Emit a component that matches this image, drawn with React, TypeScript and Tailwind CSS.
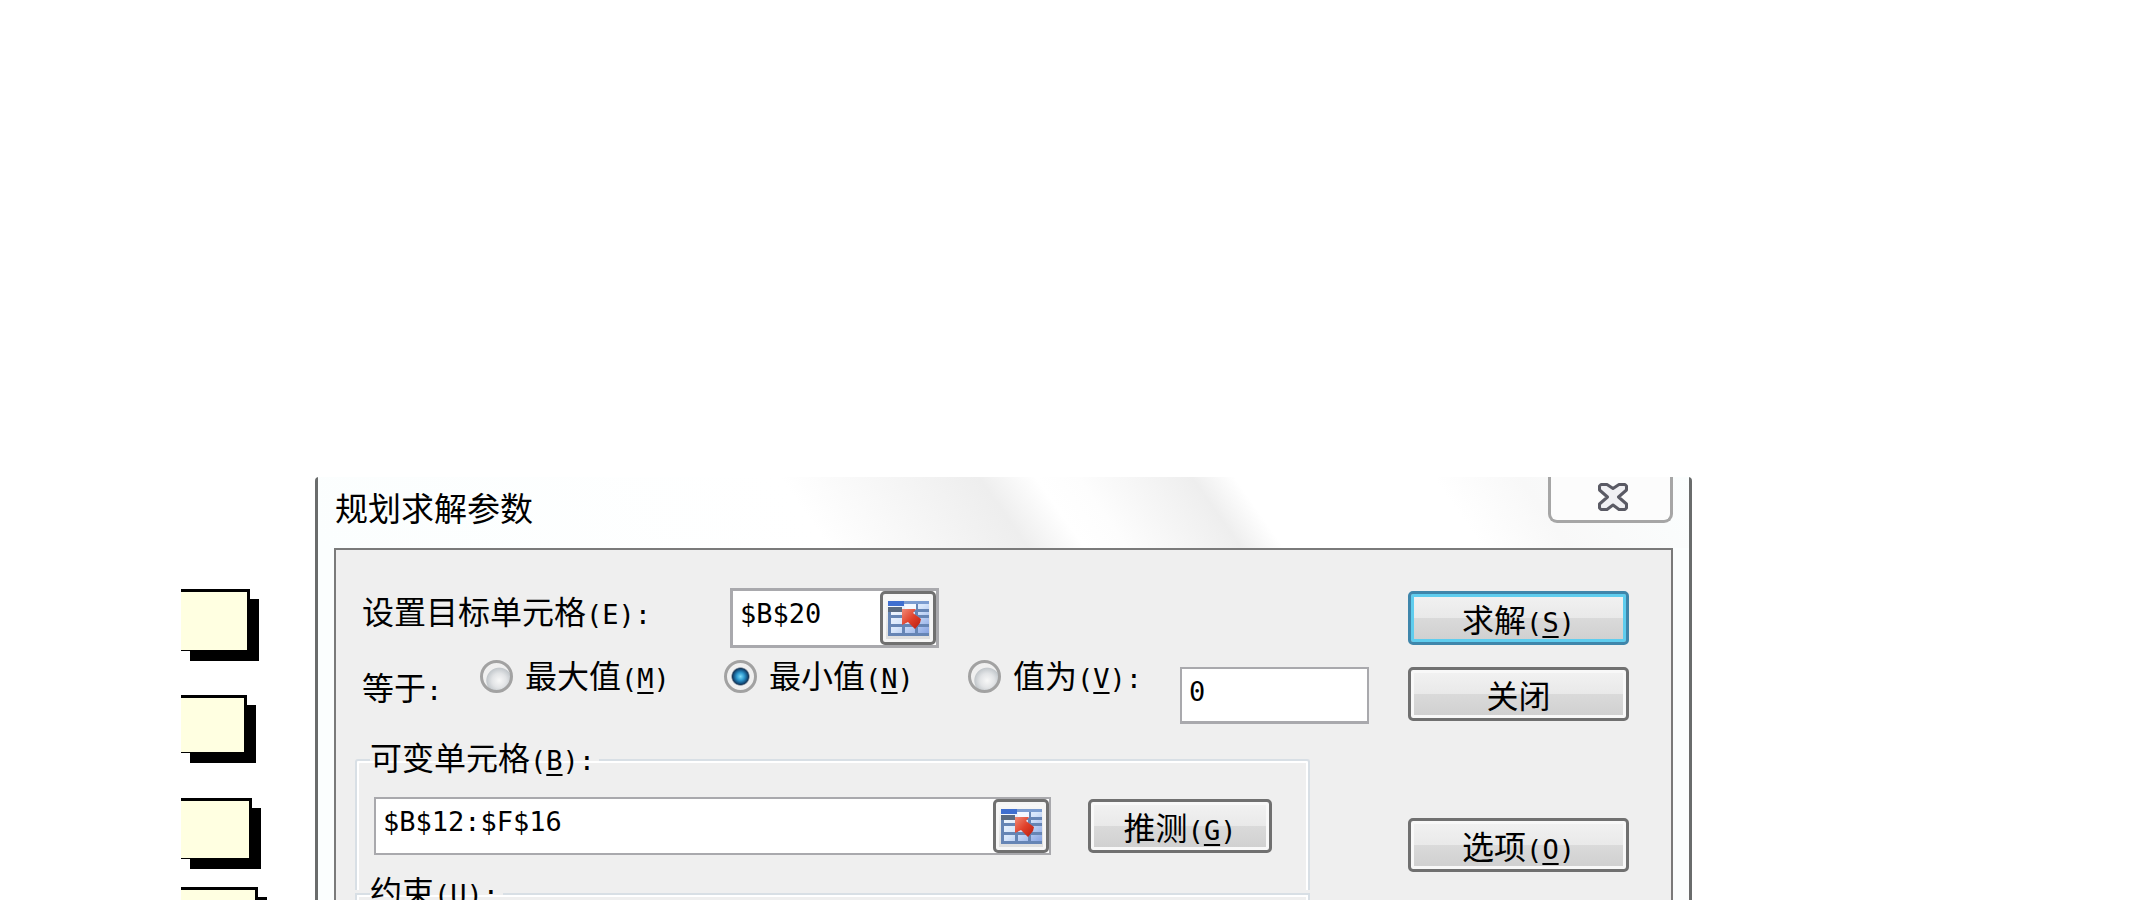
import type { ReactNode } from "react";

const cjk = "font-['Noto_Sans_CJK_SC',sans-serif]";
const mono = "font-['DejaVu_Sans_Mono',monospace]";

function Key({ letter, plain, colon }: { letter?: string; plain?: boolean; colon?: boolean }) {
  return (
    <span className={`text-[27px] leading-none ${mono}`}>
      {letter && (
        <>
          (<span className={plain ? "" : "underline decoration-2 underline-offset-4"}>{letter}</span>)
        </>
      )}
      {colon && ":"}
    </span>
  );
}

function PushButton({ children, primary, className = "" }: { children: ReactNode; primary?: boolean; className?: string }) {
  const tone = primary
    ? "border-[#3f86ab] shadow-[inset_0_0_0_3px_#5fcdee]"
    : "border-[#707070] shadow-[inset_0_0_0_3px_#f8f8f8]";
  return (
    <button
      type="button"
      className={`h-[54px] shrink-0 rounded-[5px] border-[3px] bg-[linear-gradient(#f2f2f2,#e9e9e9_50%,#dadada_50%,#cfcfcf)] leading-[36px] whitespace-nowrap ${tone} ${className}`}
    >
      {children}
    </button>
  );
}

function PickerIcon() {
  return (
    <svg viewBox="0 0 41 35" className="h-[35px] w-[41px]" aria-hidden="true">
      <defs>
        <linearGradient id="sheet" x1="0" y1="0" x2="1" y2="1">
          <stop offset="0" stopColor="#ffffff" />
          <stop offset="0.5" stopColor="#d6e5fb" />
          <stop offset="1" stopColor="#7f9de0" />
        </linearGradient>
        <linearGradient id="arrow" x1="0" y1="0" x2="1" y2="1">
          <stop offset="0" stopColor="#f08a76" />
          <stop offset="0.5" stopColor="#e0402a" />
          <stop offset="1" stopColor="#b81d10" />
        </linearGradient>
      </defs>
      <rect width="41" height="35" fill="url(#sheet)" />
      <rect width="41" height="3" fill="#7b9cd0" />
      <rect width="16" height="5" fill="#3f6fd0" />
      <rect y="6" width="14" height="5" fill="#5b6b80" />
      <path d="M15 9.500H41M0 15.500H41M0 24.500H41M0 33.500H41" stroke="#6685b5" strokeWidth="3" />
      <path d="M1.500 11V35M15.500 14V35M28.500 3V35" stroke="#6685b5" strokeWidth="3" />
      <path d="M17 3H28V9H17Z" fill="#f4f8ff" />
      <path d="M14 8H28L25 12L33 18L32 22L27 28L20 21L14 24Z" fill="url(#arrow)" />
    </svg>
  );
}

function RefField({ label, value, border }: { label: string; value: string; border: string }) {
  return (
    <div className={`flex items-start border-[#a9a9ad] bg-white ${border}`}>
      <input
        aria-label={label}
        defaultValue={value}
        className={`h-11 min-w-0 flex-1 bg-transparent pl-[7px] text-[27px] outline-none ${mono}`}
      />
      <button
        type="button"
        aria-label={`${label} ▾`}
        className="flex h-[54px] w-14 shrink-0 items-center justify-center rounded-[5px] border-[3px] border-[#707070] bg-linear-to-b from-[#fafafa] to-[#dcdcdc] shadow-[inset_0_0_0_3px_#f6f6f6]"
      >
        <PickerIcon />
      </button>
    </div>
  );
}

function Radio({ children, checked, className }: { children: ReactNode; checked?: boolean; className: string }) {
  return (
    <label className={`flex shrink-0 items-center gap-3 whitespace-nowrap ${className}`}>
      <input
        type="radio"
        name="goal"
        defaultChecked={checked}
        className="size-[33px] shrink-0 appearance-none rounded-full border-[3px] border-[#a2a2a2] bg-[radial-gradient(circle_at_60%_65%,#f8f8f8_0,#e2e4e6_30%,#c3c8cc_52%,#f0f0f0_56%)] checked:bg-[radial-gradient(circle,#7fdcf8_0,#2f9ad0_20%,#124a78_38%,#1b3a5a_42%,#f0f0f0_50%)]"
      />
      <span className="pb-1">{children}</span>
    </label>
  );
}

function Note({ className }: { className: string }) {
  return <div className={`border-t-[3px] border-r-[3px] border-b border-black bg-[#ffffe1] shadow-[9px_10px_0_black] ${className}`} />;
}

function CloseGlyph() {
  return (
    <svg viewBox="0 0 30 28" className="h-[28px] w-[30px]" aria-hidden="true">
      <path
        d="M3 1.500H9L15 5.500L21 1.500H27L28.500 3V7L20.500 14L28.500 21V25L27 26.500H21L15 22L9 26.500H3L1.500 25V21L9.500 14L1.500 7V3Z"
        fill="#f0f0f3"
        stroke="#5a5a64"
        strokeWidth="3"
        strokeLinejoin="round"
      />
    </svg>
  );
}

const groupBorder = "border-[#d8dfe5] shadow-[inset_2px_2px_0_white,inset_-2px_0_0_white]";

export default function App() {
  return (
    <div className={`flex h-screen overflow-hidden bg-white pt-[477px] pr-[457px] pl-[181px] text-[32px] leading-[36px] text-black ${cjk}`}>
      <div className="w-[134px] shrink-0 overflow-hidden pt-[112px]">
        <Note className="h-[62px] w-[69px]" />
        <Note className="mt-[44px] h-[58px] w-[66px]" />
        <Note className="mt-[45px] h-[61px] w-[71px]" />
        <Note className="mt-[28px] h-[61px] w-[77px]" />
      </div>

      <main className="flex min-w-0 flex-1 flex-col rounded-t-[4px] border-x-[3px] border-[#6a6c6c] bg-[#fbfefe]">
        <header className="flex h-[71px] shrink-0 items-start justify-between bg-[linear-gradient(55deg,#fbfefe_0,#ffffff_36%,#efefef_49%,#eeeeee_50%,#ffffff_54%,#fdfdfd_57%,#f0f0f0_64%,#eeeeee_65%,#ffffff_68%,#ffffff_82%,#f8f8f8_88%,#fbfefe_100%)] pr-4 pl-[17px]">
          <h1 className="pt-3 text-[33px]">规划求解参数</h1>
          <button
            type="button"
            aria-label="关闭"
            className="flex h-[46px] w-[125px] justify-center rounded-b-[9px] border-x-[3px] border-b-[3px] border-[#a6a6a6] bg-[#fcfcfc] pt-[6px] pl-1"
          >
            <CloseGlyph />
          </button>
        </header>

        <div className="mr-4 ml-4 flex min-h-0 flex-1 gap-[39px] border-x-2 border-t-2 border-[#7a7a7a] bg-[#efefef] pt-[38px] pr-[42px] pl-[19px]">
          <div className="min-w-0 flex-1">
            <div className="flex pl-[7px]">
              <div className="w-[368px] shrink-0 pt-1">
                设置目标单元格
                <Key letter="E" plain colon />
              </div>
              <div className="w-[209px]">
                <RefField label="设置目标单元格" value="$B$20" border="border-[3px]" />
              </div>
            </div>

            <div className="mt-2 flex items-start pl-[7px]">
              <div className="w-[118px] shrink-0 pt-3">
                等于
                <Key colon />
              </div>
              <Radio className="w-[244px]">
                最大值
                <Key letter="M" />
              </Radio>
              <Radio className="w-[244px]" checked>
                最小值
                <Key letter="N" />
              </Radio>
              <Radio className="w-[212px]">
                值为
                <Key letter="V" colon />
              </Radio>
              <div className="mt-[11px] h-[57px] min-w-0 flex-1 border-2 border-b-[3px] border-[#a9a9ad] bg-white">
                <input aria-label="值为" defaultValue="0" className={`h-11 w-full bg-transparent pl-[7px] text-[27px] outline-none ${mono}`} />
              </div>
            </div>

            <fieldset className={`mt-[14px] mr-[59px] h-[152px] rounded-t-[3px] border-x-2 border-t-2 pl-[17px] ${groupBorder}`}>
              <legend className="-ml-1 pr-1 pb-2">
                可变单元格
                <Key letter="B" colon />
              </legend>
              <div className="flex items-start gap-[37px] pt-[15px] pr-9">
                <div className="min-w-0 flex-1">
                  <RefField label="可变单元格" value="$B$12:$F$16" border="border-2" />
                </div>
                <PushButton className="mt-[2px] w-[184px]">
                  推测
                  <Key letter="G" />
                </PushButton>
              </div>
            </fieldset>
            <fieldset className={`-mt-[18px] mr-[59px] h-[152px] border-x-2 border-t-2 pl-[17px] ${groupBorder}`}>
              <legend className="-ml-1 pr-1 pb-2">
                约束
                <Key letter="U" colon />
              </legend>
            </fieldset>
          </div>

          <div className="flex w-[221px] shrink-0 flex-col pt-[3px]">
            <PushButton primary>
              求解
              <Key letter="S" />
            </PushButton>
            <PushButton className="mt-[22px]">关闭</PushButton>
            <PushButton className="mt-[97px]">
              选项
              <Key letter="O" />
            </PushButton>
          </div>
        </div>
      </main>
    </div>
  );
}
